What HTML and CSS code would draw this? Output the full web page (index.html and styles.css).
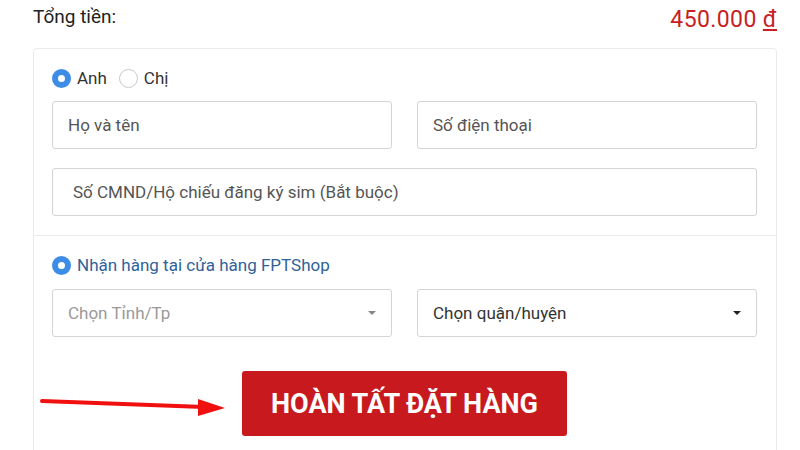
FILE: index.html
```html
<!DOCTYPE html>
<html lang="vi">
<head>
    <meta charset="UTF-8">
    <meta name="viewport" content="width=device-width, initial-scale=1.0">
    <title>Đặt hàng</title>
    <link rel="stylesheet" href="styles.css">
</head>
<body>
    <div class="checkout">
        <div class="total">
            <span class="total-label">Tổng tiền:</span>
            <span class="total-price">450.000 <u>đ</u></span>
        </div>

        <div class="card">
            <div class="section">
                <div class="gender">
                    <label class="radio"><span class="dot checked"></span>Anh</label>
                    <label class="radio"><span class="dot"></span>Chị</label>
                </div>
                <div class="row">
                    <div class="field">Họ và tên</div>
                    <div class="field">Số điện thoại</div>
                </div>
                <div class="field wide">Số CMND/Hộ chiếu đăng ký sim (Bắt buộc)</div>
            </div>

            <div class="section">
                <label class="radio store"><span class="dot checked"></span>Nhận hàng tại cửa hàng FPTShop</label>
                <div class="row">
                    <div class="field select placeholder">Chọn Tỉnh/Tp<span class="caret"></span></div>
                    <div class="field select">Chọn quận/huyện<span class="caret dark"></span></div>
                </div>
                <div class="actions">
                    <button class="submit">HOÀN TẤT ĐẶT HÀNG</button>
                </div>
            </div>
        </div>

        <svg class="arrow" width="200" height="24" viewBox="0 0 200 24">
            <line x1="4" y1="5" x2="166" y2="11" stroke="#f01010" stroke-width="4" stroke-linecap="round"/>
            <polygon points="160,3 187,12 160,20" fill="#f01010"/>
        </svg>
    </div>
</body>
</html>
```

FILE: styles.css
```css
body {
    margin: 0;
    background-color: #fff;
    font-family: Roboto, "Liberation Sans", Arial, sans-serif;
    color: #333;
}
.checkout {
    position: relative;
    padding: 0 23px 0 33px;
}
.total {
    display: flex;
    justify-content: space-between;
    align-items: center;
    height: 36px;
    margin-bottom: 12px;
}
.total-label {
    font-size: 19px;
    color: #222;
    margin-top: -3px;
}
.total-price {
    font-size: 23px;
    color: #c81e24;
    letter-spacing: 0.4px;
    margin-top: 2px;
}
.total-price u {
    text-underline-offset: 2px;
}
.card {
    border: 1px solid #ebebeb;
    border-radius: 4px;
}
.section {
    padding: 19px 19px 19px 18px;
}
.section + .section {
    border-top: 1px solid #ebebeb;
    padding-top: 19px;
    padding-bottom: 40px;
}
.gender {
    display: flex;
    gap: 12px;
    margin-bottom: 13px;
}
.radio {
    display: flex;
    align-items: center;
    font-size: 17px;
    color: #333;
}
.dot {
    width: 19px;
    height: 19px;
    box-sizing: border-box;
    border: 1px solid #c8c8c8;
    border-radius: 50%;
    margin-right: 6px;
    background-color: #fff;
}
.dot.checked {
    border: 6px solid #3d8de6;
}
.store {
    color: #2f6299;
    margin-bottom: 14px;
}
.row {
    display: grid;
    grid-template-columns: 1fr 1fr;
    gap: 25px;
    margin-bottom: 19px;
}
.field {
    height: 48px;
    box-sizing: border-box;
    border: 1px solid #d4d4d4;
    border-radius: 3px;
    padding: 0 15px;
    display: flex;
    align-items: center;
    font-size: 17px;
    color: #555;
}
.field.wide {
    padding-left: 20px;
}
.select {
    justify-content: space-between;
    color: #333;
}
.placeholder {
    color: #999;
}
.caret {
    width: 0;
    height: 0;
    border-left: 4px solid transparent;
    border-right: 4px solid transparent;
    border-top: 4px solid #888;
}
.caret.dark {
    border-top-color: #222;
}
.row + .actions {
    margin-top: 34px;
}
.actions {
    display: flex;
    justify-content: center;
}
.submit {
    width: 325px;
    height: 65px;
    border: none;
    border-radius: 3px;
    background-color: #c8191f;
    color: #fff;
    font-family: Roboto, "Liberation Sans", Arial, sans-serif;
    font-weight: 700;
    font-size: 27px;
}
.arrow {
    position: absolute;
    left: 38px;
    top: 396px;
}
```
